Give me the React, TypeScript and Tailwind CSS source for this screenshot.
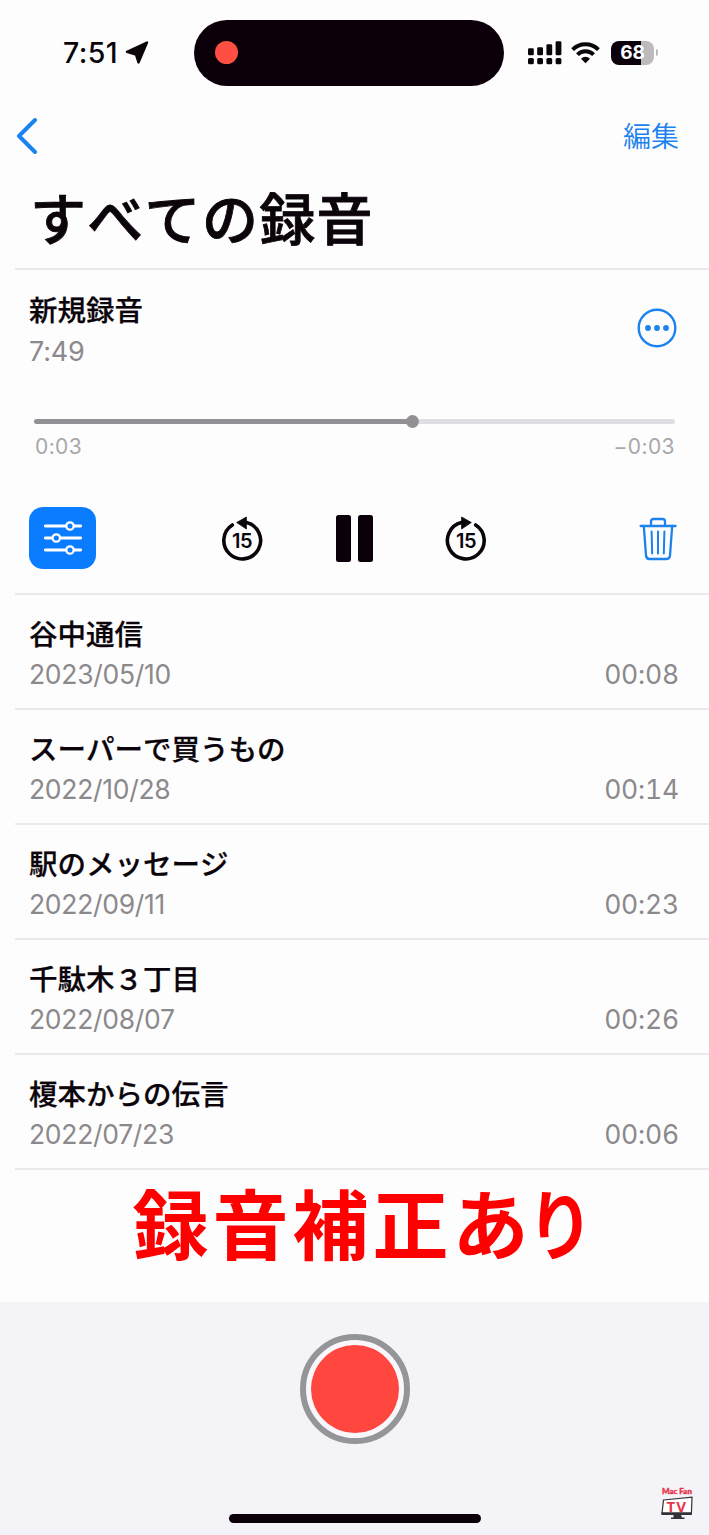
import clsx from 'clsx';

interface Recording {
  title: string;
  date: string;
  duration: string;
}

const recordings: Recording[] = [
  { title: '谷中通信', date: '2023/05/10', duration: '00:08' },
  { title: 'スーパーで買うもの', date: '2022/10/28', duration: '00:14' },
  { title: '駅のメッセージ', date: '2022/09/11', duration: '00:23' },
  { title: '千駄木３丁目', date: '2022/08/07', duration: '00:26' },
  { title: '榎本からの伝言', date: '2022/07/23', duration: '00:06' },
];

const signalHeights = [7, 8, 11, 14];

const SignalIcon = () => (
  <svg width="34" height="24" viewBox="0 0 34 24">
    {signalHeights.map((height, index) => (
      <g key={height} fill="#0b050b">
        <rect x={index * 9.2} y={14.3 - height} width="5.8" height={height} rx="1.3" />
        <rect x={index * 9.2} y="17" width="5.8" height="6.2" rx="1.5" />
      </g>
    ))}
  </svg>
);

const WifiIcon = () => (
  <svg width="29" height="22" viewBox="0 0 29 22" fill="none" stroke="#0b050b" strokeWidth="4">
    <path d="M1.6 7.6a18.4 18.4 0 0 1 25.8 0" />
    <path d="M6.4 12.6a11.6 11.6 0 0 1 16.2 0" />
    <path d="M14.5 21.2 10 16.7a6.4 6.4 0 0 1 9 0Z" fill="#0b050b" stroke="none" />
  </svg>
);

const SkipIcon = ({ forward = false }: { forward?: boolean }) => (
  <div className="relative flex h-[48px] w-[44px] items-center justify-center">
    <svg
      className={clsx('absolute top-[2px] left-0', forward && '-scale-x-100')}
      width="44"
      height="48"
      viewBox="0 0 44 48"
      fill="none"
    >
      <path d="M26.5 6.6A18.4 18.4 0 1 1 12.3 9" stroke="#0b050b" strokeWidth="3.6" strokeLinecap="round" />
      <path d="M16.7 6.5 26.4 1v12Z" fill="#0b050b" stroke="#0b050b" strokeWidth="0.8" strokeLinejoin="round" />
    </svg>
    <span className="relative top-[3px] text-[20px] leading-none font-semibold tracking-[-0.5px]">15</span>
  </div>
);

const SlidersIcon = () => (
  <svg width="40" height="34" viewBox="0 0 40 34" stroke="#fff" strokeWidth="2.8" strokeLinecap="round">
    <path d="M2.3 5h35.4M2.3 17h35.4M2.3 29h35.4" />
    <g fill="#0a7cff" strokeWidth="2.3">
      <circle cx="27" cy="5" r="3.7" />
      <circle cx="13.3" cy="17" r="3.7" />
      <circle cx="27" cy="29" r="3.7" />
    </g>
  </svg>
);

const TrashIcon = () => (
  <svg
    width="38"
    height="44"
    viewBox="0 0 38 44"
    fill="none"
    stroke="#1b82ee"
    strokeWidth="2.3"
    strokeLinecap="round"
    strokeLinejoin="round"
  >
    <path d="M1.6 9h35M12 9V4.5Q12 2 14.5 2h9Q26 2 26 4.5V9" />
    <path d="M4.8 9 7 38.5Q7.4 42 10.5 42h17Q30.7 42 31 38.5L33.2 9" />
    <path d="M12.6 14.5l.6 22M19 14.5v22M25.4 14.5l-.6 22" strokeWidth="2" />
  </svg>
);

const StatusBar = () => (
  <div className="flex h-[105px] items-center">
    <div className="flex w-[194px] items-center gap-[7px] pl-[63px]">
      <span className="w-[55px] pt-[2px] text-[28.5px] leading-none font-medium tracking-[0.4px] whitespace-nowrap">
        7:51
      </span>
      <svg width="24" height="24" viewBox="0 0 24 24">
        <path
          d="M22 1.5 13.5 21.5 11 13.6 2 10.8Z"
          fill="#0b050b"
          stroke="#0b050b"
          strokeWidth="2.4"
          strokeLinejoin="round"
        />
      </svg>
    </div>
    <div className="flex h-[66px] w-[310px] items-center rounded-full bg-[#0b0009] pl-[21px]">
      <div className="size-[23px] rounded-full bg-[#fe4f42]" />
    </div>
    <div className="flex items-center pl-[24px]">
      <SignalIcon />
      <div className="ml-[9px]">
        <WifiIcon />
      </div>
      <div className="ml-[11px] flex h-[24px] w-[43px] items-center justify-center rounded-[8px] bg-linear-to-r from-[#0b0009] from-69% to-[#bdbabd] to-69%">
        <span className="text-[19px] leading-none font-bold text-white">68</span>
      </div>
      <div className="ml-[1.5px] h-[7px] w-[2.5px] rounded-r-full bg-[#bdbabd]" />
    </div>
  </div>
);

const Player = () => (
  <section className="ml-[15px] h-[325px] border-b-2 border-[#ebe9ec] pr-[32px] pl-[14px]">
    <div className="flex h-[116px] justify-between pt-[21px]">
      <div>
        <h2 className="text-[28.5px] leading-[40px] font-medium [font-kerning:none] [-webkit-text-stroke:0.25px]">
          新規録音
        </h2>
        <p className="text-[27px] leading-[42px] tracking-[-0.2px] text-[#8b898c]">7:49</p>
      </div>
      <svg className="mt-[17px]" width="40" height="40" viewBox="0 0 40 40" fill="#1b82ee">
        <circle cx="20" cy="20" r="18.3" fill="none" stroke="#1b82ee" strokeWidth="2.4" />
        <circle cx="11" cy="20" r="2.9" />
        <circle cx="20" cy="20" r="2.9" />
        <circle cx="29" cy="20" r="2.9" />
      </svg>
    </div>
    <div className="mt-[29px] mr-[2px] ml-[5px]">
      <div className="flex h-[13px] items-center">
        <div className="h-[5px] w-[373px] rounded-l-full bg-[#929094]" />
        <div className="-ml-[1px] size-[13px] rounded-full bg-[#929094]" />
        <div className="h-[5px] flex-1 rounded-r-full bg-[#e0dee2]" />
      </div>
      <div className="mt-[7px] flex justify-between pl-[1px] text-[21px] leading-[24px] tracking-[0.4px] text-[#a9a7aa]">
        <span>0:03</span>
        <span>−0:03</span>
      </div>
    </div>
    <div className="mt-[48px] flex h-[62px] items-center">
      <button className="flex h-[62px] w-[67px] items-center justify-center rounded-[14px] bg-[#0a7cff]">
        <SlidersIcon />
      </button>
      <div className="ml-[124px]">
        <SkipIcon />
      </div>
      <div className="ml-[72px] flex gap-[7px]">
        <div className="h-[47px] w-[15px] rounded-[2.5px] bg-[#0b0009]" />
        <div className="h-[47px] w-[15px] rounded-[2.5px] bg-[#0b0009]" />
      </div>
      <div className="ml-[71px]">
        <SkipIcon forward />
      </div>
      <div className="ml-auto pt-[1px]">
        <TrashIcon />
      </div>
    </div>
  </section>
);

const RecordingRow = ({ title, date, duration }: Recording) => (
  <li className="ml-[15px] h-[115px] border-b-2 border-[#ebe9ec] pt-[20px] pr-[30px] pl-[14px]">
    <h2 className="text-[28.5px] leading-[40px] font-medium [font-kerning:none] [-webkit-text-stroke:0.25px]">
      {title}
    </h2>
    <div className="flex justify-between text-[26.5px] leading-[38px] text-[#8b898c]">
      <span className="tracking-[-0.3px]">{date}</span>
      <span className="tracking-[-0.2px] tabular-nums">{duration}</span>
    </div>
  </li>
);

const Logo = () => (
  <div className="flex w-[36px] flex-col items-center">
    <span className="font-['Lato'] text-[8px] leading-[10px] font-black whitespace-nowrap text-[#e8364c] [-webkit-text-stroke:0.4px]">
      Mac Fan
    </span>
    <div className="relative h-[24px] w-[32px]">
      <svg className="absolute inset-0" width="32" height="24" viewBox="0 0 32 24">
        <path d="M2.5 4 31 1.2 30.4 17.5H1Z" fill="#fff" stroke="#333038" strokeWidth="1.2" />
        <path d="M.5 16.2h30.4v2.8H.5ZM12.5 19H20l1 2.5h2.5V23H10v-1.5h2.5Z" fill="#333038" />
      </svg>
      <span className="absolute top-[2.5px] left-[5.5px] font-['Open_Sans'] text-[15px] leading-[14px] font-bold tracking-[1px] text-[#e8364c]">
        TV
      </span>
    </div>
  </div>
);

export default function App() {
  return (
    <main
      lang="ja"
      className="flex h-[1535px] w-[709px] flex-col overflow-hidden bg-[#fefdfe] font-['Inter','Noto_Sans_CJK_JP',sans-serif] text-[#0b050b]"
    >
      <StatusBar />
      <nav className="flex h-[60px] items-center justify-between pr-[30px] pl-[15px]">
        <svg width="24" height="38" viewBox="0 0 24 38" fill="none">
          <path
            d="M20 4 4 20 20 36"
            stroke="#1b82ee"
            strokeWidth="4"
            strokeLinecap="round"
            strokeLinejoin="round"
          />
        </svg>
        <button className="pt-[4px] text-[28px] leading-[56px] font-[350] text-[#1b82ee]">編集</button>
      </nav>
      <header className="ml-[15px] h-[105px] border-b-2 border-[#ebe9ec] pl-[15px]">
        <h1 className="text-[56px] leading-[110px] font-medium tracking-[1.3px] [font-kerning:none] [-webkit-text-stroke:0.8px]">
          すべての録音
        </h1>
      </header>
      <Player />
      <ul>
        {recordings.map((recording) => (
          <RecordingRow key={recording.title} {...recording} />
        ))}
      </ul>
      <p className="h-[132px] pl-[132.5px] text-[76px] leading-[112px] font-bold tracking-[4px] whitespace-nowrap text-[#ff0000]">
        録音補正あ<span className="-ml-[6px] inline-block origin-left scale-x-[0.88]">り</span>
      </p>
      <footer className="relative flex flex-1 flex-col items-center bg-[#f4f3f8] pt-[32px]">
        <button className="flex size-[110px] items-center justify-center rounded-full border-[6px] border-[#949598] bg-[#f9f7fb]">
          <div className="size-[88px] rounded-full bg-[#ff473f]" />
        </button>
        <div className="mt-[70px] h-[9px] w-[252px] rounded-full bg-[#0b0009]" />
        <div className="absolute top-[184px] right-[14px]">
          <Logo />
        </div>
      </footer>
    </main>
  );
}
